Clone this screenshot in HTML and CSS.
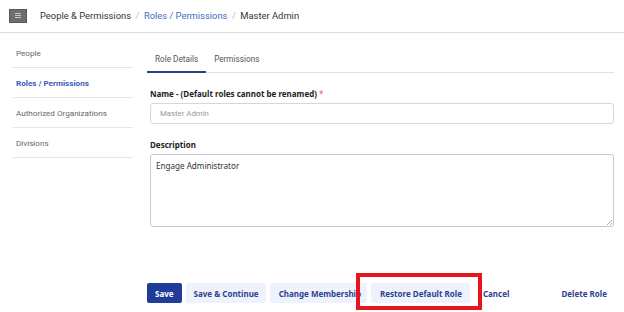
FILE: index.html
```html
<!DOCTYPE html>
<html>
<head>
<meta charset="utf-8">
<link rel="stylesheet" href="styles.css">
</head>
<body>
<header class="topbar">
  <span class="menu-btn"><span></span><span></span><span></span></span>
  <nav class="crumbs">
    <span class="crumb">People &amp; Permissions</span>
    <span class="sep">/</span>
    <span class="crumb link">Roles / Permissions</span>
    <span class="sep">/</span>
    <span class="crumb">Master Admin</span>
  </nav>
</header>
<div class="main">
  <aside class="sidebar">
    <div class="side-item">People</div>
    <div class="side-item active">Roles / Permissions</div>
    <div class="side-item">Authorized Organizations</div>
    <div class="side-item">Divisions</div>
  </aside>
  <section class="content">
    <div class="tabs">
      <div class="tab active">Role Details</div>
      <div class="tab">Permissions</div>
    </div>
    <div class="form">
      <label class="label">Name - (Default roles cannot be renamed) <span class="req">*</span></label>
      <div class="input">Master Admin</div>
      <label class="label desc-label">Description</label>
      <div class="textarea">Engage Administrator<span class="grip"></span></div>
    </div>
    <div class="actions">
      <button class="btn primary">Save</button>
      <button class="btn soft">Save &amp; Continue</button>
      <button class="btn soft change">Change Membership</button>
      <button class="btn soft restore">Restore Default Role<span class="highlight"></span></button>
      <button class="btn plain">Cancel</button>
      <button class="btn plain delete">Delete Role</button>
    </div>
  </section>
</div>
</body>
</html>
```
FILE: styles.css
```css
* { box-sizing: border-box; }
html, body { margin: 0; padding: 0; background: #fff; }
body { width: 624px; height: 312px; overflow: hidden; font-family: Roboto, "Liberation Sans", sans-serif; color: #333; }

.topbar {
  height: 33px;
  border-bottom: 1px solid #dcdcdc;
  display: flex;
  align-items: center;
  padding-left: 9px;
}
.menu-btn {
  width: 18px; height: 14px;
  background: #6e6e6e;
  border: 1px solid #5a5a5a;
  display: flex; flex-direction: column; align-items: center; justify-content: center; gap: 1px;
  margin-right: 13px;
  margin-top: -1px;
}
.menu-btn span { width: 6px; height: 1px; background: #c8c8c8; }
.crumbs { display: flex; align-items: center; gap: 4.5px; font-size: 9.4px; margin-top: -1px; }
.crumb { color: #333; }
.crumb.link { color: #4a68c0; }
.sep { color: #bbb; }

.main { display: flex; }
.sidebar { width: 133px; padding-top: 5px; padding-left: 13px; }
.side-item {
  height: 30px;
  border-bottom: 1px solid #e6e6e6;
  padding-left: 3px;
  display: flex; align-items: center;
  font-size: 8.1px;
  color: #666;
}
.side-item.active { color: #3d5cb8; font-weight: 700; }

.content { width: 467px; margin-left: 14px; }
.tabs { display: flex; border-bottom: 1px solid #e2e2e2; height: 40px; align-items: flex-end; }
.tab { font-size: 8.2px; color: #555; padding: 0 9px 0 8px; height: 19px; border-bottom: 2px solid transparent; margin-bottom: -1px; line-height: 10px; white-space: nowrap; }
.tab.active { border-bottom-color: #24408e; padding-right: 8px; }

.form { padding-left: 3px; padding-top: 15px; font-family: "Noto Sans", "Open Sans", sans-serif; }
.label { display: block; font-weight: 700; font-size: 8px; color: #222; line-height: 12px; }
.req { color: #e06070; font-weight: 400; }
.input {
  margin-top: 3px;
  height: 21px;
  border: 1px solid #d6d6dc;
  border-radius: 3px;
  padding-left: 9px;
  display: flex; align-items: center;
  font-family: Roboto, sans-serif;
  font-size: 7.8px;
  color: #9a9a9a;
}
.desc-label { margin-top: 15px; }
.textarea {
  position: relative;
  margin-top: 3px;
  height: 73px;
  border: 1px solid #c8c8d0;
  border-radius: 3px;
  padding: 5px 5px;
  font-size: 8.1px;
  color: #333;
}
.grip {
  position: absolute; right: 1px; bottom: 1px; width: 5px; height: 5px;
  background: linear-gradient(135deg, transparent 45%, #aaa 45%, #aaa 55%, transparent 55%, transparent 75%, #aaa 75%, #aaa 85%, transparent 85%);
}

.actions { display: flex; align-items: center; margin-top: 56px; font-family: "Noto Sans", "Open Sans", sans-serif; }
.btn {
  height: 20px; border: none; border-radius: 2px;
  font-family: inherit; font-weight: 700; font-size: 8px;
  padding: 0 8px; margin-right: 4px;
  cursor: pointer; white-space: nowrap;
}
.btn.primary { background: #1f3d98; color: #fff; padding: 0 8px; }
.btn.soft { background: #eef2fc; color: #2d428f; padding: 0 7px 0 8px; }
.btn.change { margin-right: 4px; padding: 0 6px 0 9px; }
.btn.restore { position: relative; padding: 0 8px 0 9px; }
.btn.plain { background: none; color: #2d428f; padding: 0 4px 0 9px; }
.btn.delete { margin-left: auto; margin-right: 3px; }
.highlight {
  position: absolute;
  left: -15px; top: -10px; right: -12px; bottom: -7px;
  border: 4px solid #e8141e;
}
```
